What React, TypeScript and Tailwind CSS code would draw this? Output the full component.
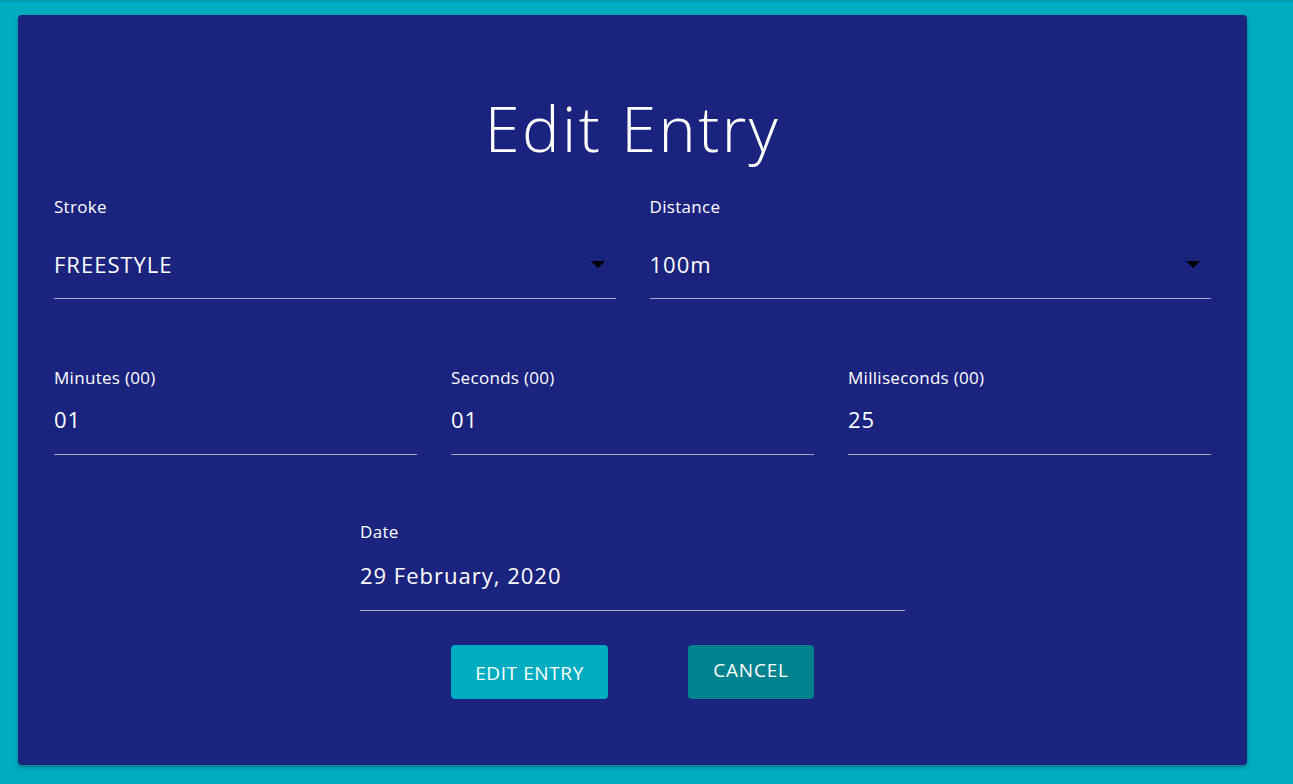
import React from "react";

const font = { fontFamily: '"Open Sans", "Noto Sans", sans-serif' };

function Arrow() {
  return (
    <svg width="14" height="7" viewBox="0 0 14 7" className="block">
      <polygon points="0,0 14,0 7,7" fill="#000" />
    </svg>
  );
}

function SelectField({ label, value }: { label: string; value: string }) {
  return (
    <div className="flex-1">
      <div className="text-[17px] leading-[20px] tracking-[0.3px] text-white">{label}</div>
      <div className="mt-[35px] pb-[22px] border-b border-[#a3a7cb] flex items-center justify-between">
        <span className="text-[22px] leading-[24px] tracking-[1px] text-white">{value}</span>
        <span className="mr-[11px]">
          <Arrow />
        </span>
      </div>
    </div>
  );
}

function TextField({
  label,
  value,
  gap,
  pb,
  className = "flex-1",
}: {
  label: string;
  value: string;
  gap: string;
  pb: string;
  className?: string;
}) {
  return (
    <div className={className}>
      <div className="text-[17px] leading-[20px] tracking-[0.3px] text-white">{label}</div>
      <div
        className={`${gap} ${pb} border-b border-[#a8a8b8] text-[22px] leading-[24px] tracking-[1px] text-white`}
      >
        {value}
      </div>
    </div>
  );
}

export default function App() {
  return (
    <div className="min-h-[784px] w-full bg-[#00acc1] relative overflow-hidden" style={font}>
      <div className="absolute top-0 left-0 right-0 h-[3px] bg-gradient-to-b from-[#0096a8] to-[#00acc1]" />
      <div className="pt-[15px] pl-[18px]">
        <div className="w-[1229px] h-[750px] bg-[#1a237e] rounded-[4px] shadow-[0_2px_4px_rgba(0,0,0,0.3)] px-[36px] pt-[77px]">
          <h1 className="text-center text-white text-[63px] leading-[72px] tracking-[2.5px] font-light">Edit Entry</h1>

          <div className="mt-[33px] flex gap-[34px]">
            <SelectField label="Stroke" value="FREESTYLE" />
            <SelectField label="Distance" value="100m" />
          </div>

          <div className="mt-[69px] flex gap-[34px]">
            <TextField label="Minutes (00)" value="01" gap="mt-[19px]" pb="pb-[23px]" />
            <TextField label="Seconds (00)" value="01" gap="mt-[19px]" pb="pb-[23px]" />
            <TextField label="Milliseconds (00)" value="25" gap="mt-[19px]" pb="pb-[23px]" />
          </div>

          <div className="mt-[67px] flex justify-center">
            <TextField
              className="w-[545px]"
              label="Date"
              value="29 February, 2020"
              gap="mt-[21px]"
              pb="pb-[23px]"
            />
          </div>

          <div className="mt-[34px] flex justify-center">
            <div className="w-[363px] flex justify-between">
              <button className="w-[157px] h-[54px] rounded-[4px] bg-[#00acc1] text-white text-[19px] leading-[24px] tracking-[0.6px] pt-[2px]">
                EDIT ENTRY
              </button>
              <button className="w-[126px] h-[54px] rounded-[4px] bg-[#00838f] text-white text-[19px] leading-[24px] tracking-[0.8px] pb-[4px]">
                CANCEL
              </button>
            </div>
          </div>
        </div>
      </div>
    </div>
  );
}
